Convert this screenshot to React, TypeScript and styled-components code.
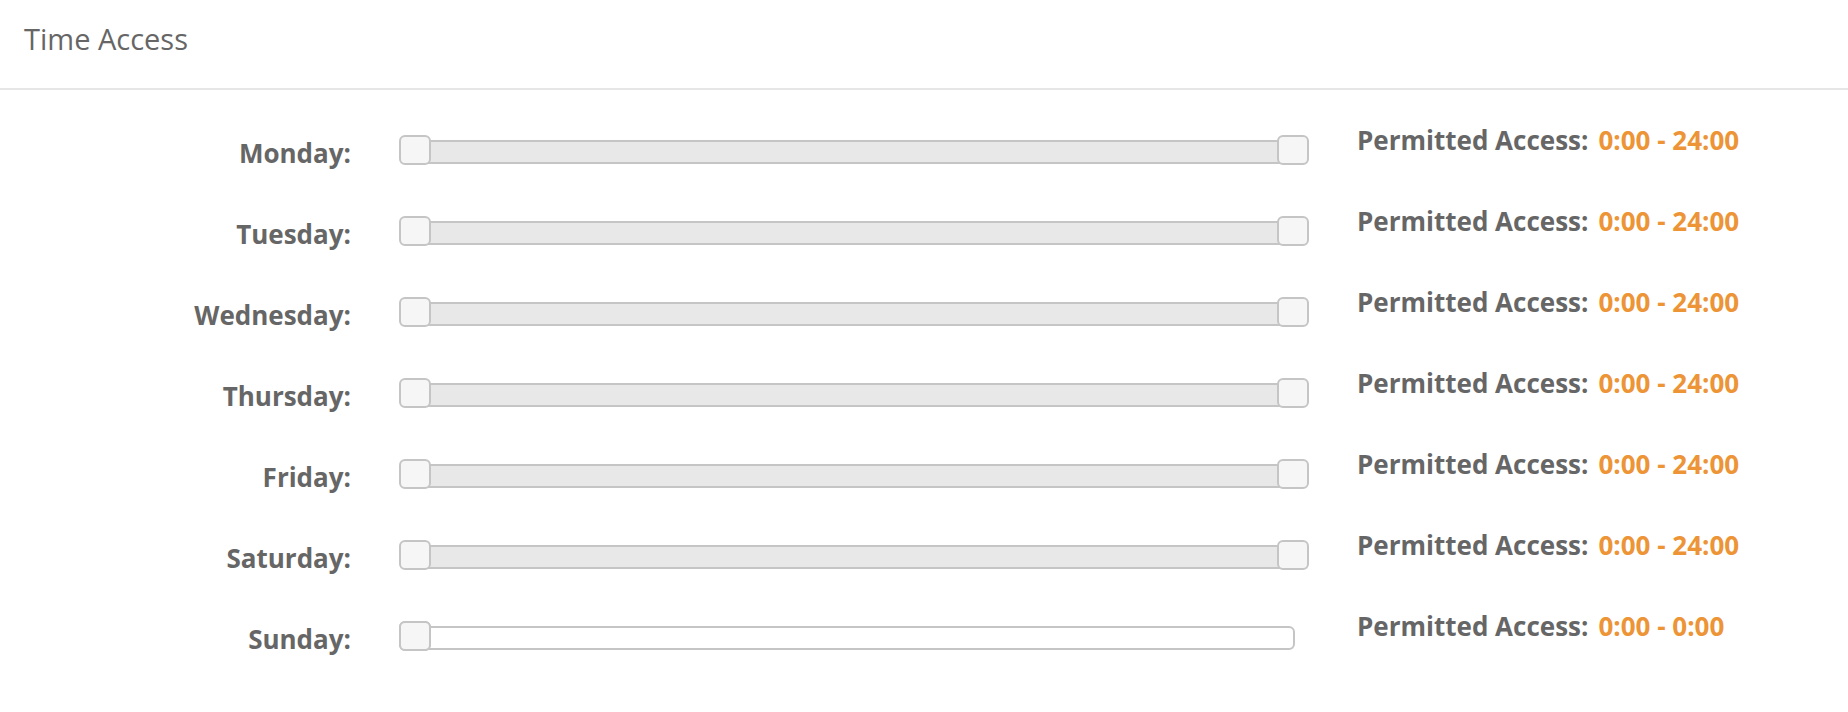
import React from 'react';
import styled, { createGlobalStyle } from 'styled-components';

const GlobalStyle = createGlobalStyle`
  html, body {
    margin: 0;
    padding: 0;
    background: #fff;
    font-family: "Open Sans", "Liberation Sans", sans-serif;
  }
`;

const days: { name: string; from: number; to: number }[] = [
  { name: 'Monday', from: 0, to: 24 },
  { name: 'Tuesday', from: 0, to: 24 },
  { name: 'Wednesday', from: 0, to: 24 },
  { name: 'Thursday', from: 0, to: 24 },
  { name: 'Friday', from: 0, to: 24 },
  { name: 'Saturday', from: 0, to: 24 },
  { name: 'Sunday', from: 0, to: 0 },
];

function TimeSlider({ from, to }: { from: number; to: number }) {
  const left = (from / 24) * 100;
  const right = (to / 24) * 100;
  return (
    <Track>
      <Range style={{ left: `${left}%`, width: `${right - left}%` }} />
      <Handle style={{ left: `${left}%` }} />
      <Handle style={{ left: `${right}%` }} />
    </Track>
  );
}

export default function App() {
  return (
    <>
      <GlobalStyle />
      <Panel>
        <Header>Time Access</Header>
        <Body>
          {days.map((d) => (
            <Row key={d.name}>
              <DayLabel>{d.name}:</DayLabel>
              <TimeSlider from={d.from} to={d.to} />
              <Permitted>
                Permitted Access:
                <Hours>
                  {d.from}:00 - {d.to}:00
                </Hours>
              </Permitted>
            </Row>
          ))}
        </Body>
      </Panel>
    </>
  );
}

const Panel = styled.div`
  width: 100%;
  background: #fff;
`;

const Header = styled.div`
  height: 90px;
  box-sizing: border-box;
  padding: 19px 0 0 24px;
  font-size: 29px;
  line-height: 40px;
  color: #666;
  border-bottom: 2px solid #e6e6e6;
`;

const Body = styled.div`
  display: flex;
  flex-direction: column;
  padding-top: 28px;
`;

const Row = styled.div`
  display: grid;
  grid-template-columns: 351px 882px auto;
  column-gap: 62px;
  align-items: start;
  height: 81px;
`;

const DayLabel = styled.div`
  padding-top: 15px;
  text-align: right;
  font-size: 26px;
  line-height: 40px;
  font-weight: 700;
  color: #666;
`;

const Track = styled.div`
  position: relative;
  margin-top: 22px;
  height: 24px;
  box-sizing: border-box;
  border: 2px solid #c5c5c5;
  border-radius: 6px;
  background: #fff;
`;

const Range = styled.div`
  position: absolute;
  top: 0;
  bottom: 0;
  background: #e8e8e8;
`;

const Handle = styled.div`
  position: absolute;
  top: -7px;
  width: 32px;
  height: 30px;
  margin-left: -16px;
  box-sizing: border-box;
  border: 2px solid #c5c5c5;
  border-radius: 6px;
  background: #f6f6f6;
`;

const Permitted = styled.div`
  padding-top: 2px;
  font-size: 26px;
  line-height: 40px;
  font-weight: 700;
  color: #666;
  white-space: nowrap;
`;

const Hours = styled.span`
  margin-left: 10px;
  color: #ec9436;
`;
